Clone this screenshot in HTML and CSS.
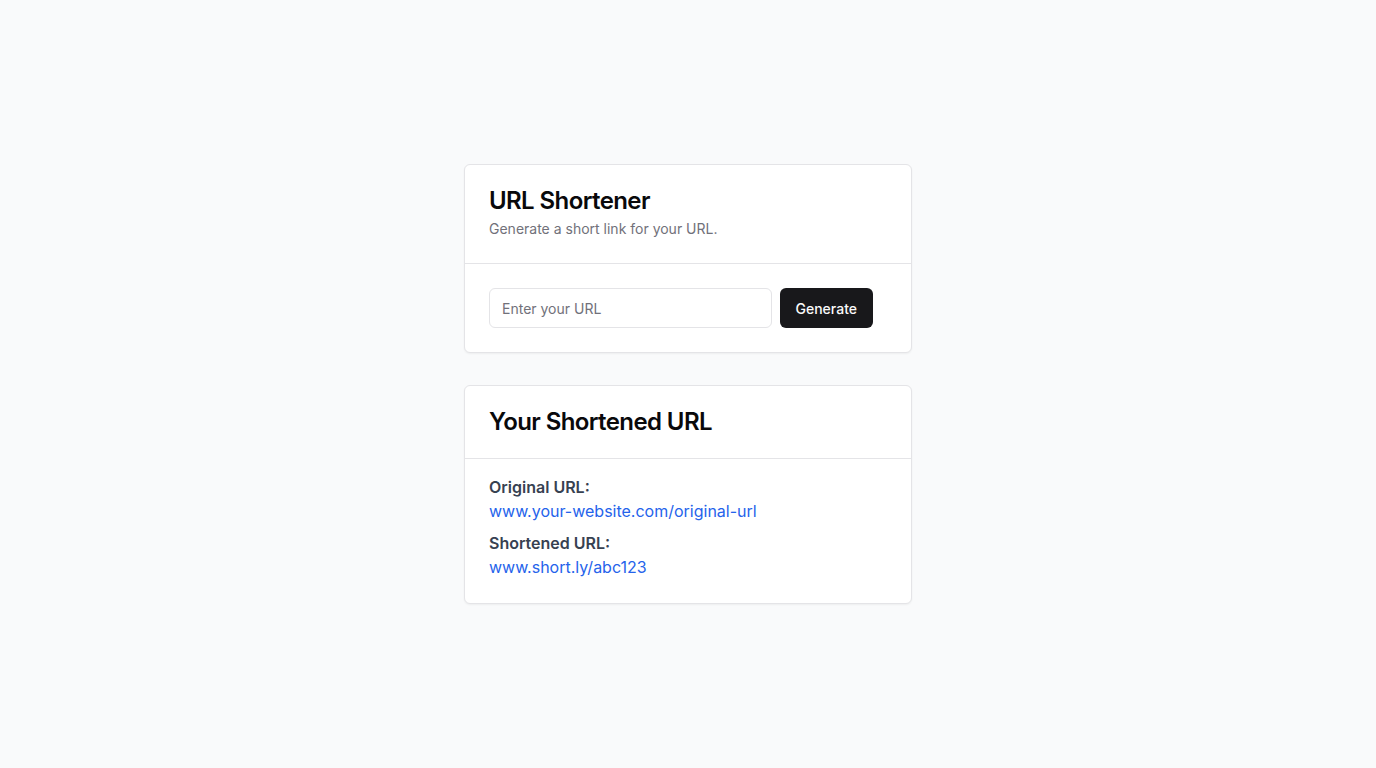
FILE: index.html
```html
<!DOCTYPE html>
<html lang="en">
<head>
<meta charset="utf-8">
<title>URL Shortener</title>
<link rel="stylesheet" href="styles.css">
</head>
<body>
<main class="page">
  <section class="card">
    <header class="card-header">
      <h1 class="card-title">URL Shortener</h1>
      <p class="card-desc">Generate a short link for your URL.</p>
    </header>
    <div class="card-content">
      <form class="url-form">
        <input class="url-input" type="text" placeholder="Enter your URL">
        <button class="btn" type="button">Generate</button>
      </form>
    </div>
  </section>
  <section class="card">
    <header class="card-header">
      <h2 class="card-title">Your Shortened URL</h2>
    </header>
    <div class="card-content result">
      <div class="field">
        <div class="label">Original URL:</div>
        <a class="link" href="#">www.your-website.com/original-url</a>
      </div>
      <div class="field">
        <div class="label">Shortened URL:</div>
        <a class="link" href="#">www.short.ly/abc123</a>
      </div>
    </div>
  </section>
</main>
</body>
</html>
```
FILE: styles.css
```css
* { box-sizing: border-box; }
html, body { margin: 0; padding: 0; }
body {
  background: #f9fafb;
  font-family: Inter, "Noto Sans", sans-serif;
  color: #09090b;
}
.page {
  min-height: 100vh;
  display: flex;
  flex-direction: column;
  align-items: center;
  justify-content: center;
  gap: 32px;
}
.card {
  width: 448px;
  background: #fff;
  border: 1px solid #e4e4e7;
  border-radius: 6px;
  box-shadow: 0 1px 2px rgba(0,0,0,0.05);
}
.card-header {
  padding: 24px;
  border-bottom: 1px solid #e4e4e7;
  display: flex;
  flex-direction: column;
  gap: 6px;
}
.card-title {
  margin: 0;
  font-size: 24px;
  line-height: 24px;
  font-weight: 600;
  letter-spacing: -0.6px;
}
.card-desc {
  margin: 0;
  font-size: 14px;
  line-height: 20px;
  color: #71717a;
}
.card-content {
  padding: 24px;
}
.url-form {
  display: flex;
  gap: 8px;
  max-width: 384px;
  margin: 0;
}
.url-input {
  flex: 1;
  min-width: 0;
  height: 40px;
  border: 1px solid #e4e4e7;
  border-radius: 6px;
  padding: 8px 12px;
  font-family: inherit;
  font-size: 14px;
  color: #09090b;
  background: #fff;
  outline: none;
}
.url-input::placeholder { color: #71717a; }
.btn {
  height: 40px;
  padding: 8px 16px;
  border: none;
  border-radius: 6px;
  background: #18181b;
  color: #fafafa;
  font-family: inherit;
  font-size: 14px;
  font-weight: 500;
  cursor: pointer;
}
.result {
  padding-top: 16px;
  display: flex;
  flex-direction: column;
  gap: 8px;
}
.label {
  font-size: 16px;
  line-height: 24px;
  font-weight: 600;
  color: #374151;
}
.link {
  display: block;
  font-size: 16px;
  line-height: 24px;
  color: #2563eb;
  text-decoration: none;
}
```
